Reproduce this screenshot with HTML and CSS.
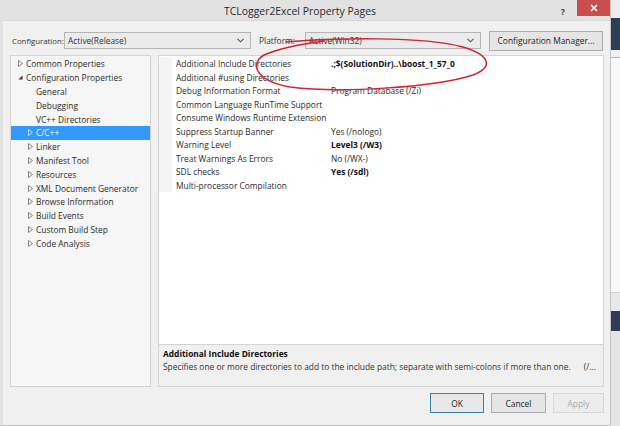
FILE: index.html
```html
<!DOCTYPE html>
<html>
<head>
<meta charset="utf-8">
<link rel="stylesheet" href="styles.css">
</head>
<body>
<div class="screen">
  <div class="dialog">
    <div class="titlebar">
      <div class="title">TCLogger2Excel Property Pages</div>
      <div class="help">?</div>
      <div class="close">
        <svg width="8" height="8" viewBox="0 0 8 8"><path d="M1 1L7 7M7 1L1 7" stroke="#fff" stroke-width="1.6"/></svg>
      </div>
    </div>
    <div class="content">
      <div class="configrow">
        <span class="lbl lbl-config">Configuration:</span>
        <div class="combo combo-config"><span>Active(Release)</span><svg class="chev" width="7" height="5" viewBox="0 0 7 5"><path d="M0.5 0.8L3.5 3.8L6.5 0.8" fill="none" stroke="#555" stroke-width="1.1"/></svg></div>
        <span class="lbl lbl-platform">Platform:</span>
        <div class="combo combo-platform"><span>Active(Win32)</span><svg class="chev" width="7" height="5" viewBox="0 0 7 5"><path d="M0.5 0.8L3.5 3.8L6.5 0.8" fill="none" stroke="#555" stroke-width="1.1"/></svg></div>
        <div class="btn btn-mgr">Configuration Manager...</div>
      </div>
      <div class="panels">
        <div class="tree">
          <div class="node l0"><svg class="tri" width="5" height="7" viewBox="0 0 5 7"><path d="M0.5 0.5L4.5 3.5L0.5 6.5Z" fill="none" stroke="#777" stroke-width="0.9"/></svg><span>Common Properties</span></div>
          <div class="node l0"><svg class="tri" width="5" height="7" viewBox="0 0 5 7"><path d="M4.5 1.5L4.5 5.5L0.5 5.5Z" fill="#333"/></svg><span>Configuration Properties</span></div>
          <div class="node l1 leaf"><span>General</span></div>
          <div class="node l1 leaf"><span>Debugging</span></div>
          <div class="node l1 leaf"><span>VC++ Directories</span></div>
          <div class="node l1 sel"><svg class="tri" width="5" height="7" viewBox="0 0 5 7"><path d="M0.5 0.5L4.5 3.5L0.5 6.5Z" fill="none" stroke="#cfe4ff" stroke-width="0.9"/></svg><span>C/C++</span></div>
          <div class="node l1"><svg class="tri" width="5" height="7" viewBox="0 0 5 7"><path d="M0.5 0.5L4.5 3.5L0.5 6.5Z" fill="none" stroke="#777" stroke-width="0.9"/></svg><span>Linker</span></div>
          <div class="node l1"><svg class="tri" width="5" height="7" viewBox="0 0 5 7"><path d="M0.5 0.5L4.5 3.5L0.5 6.5Z" fill="none" stroke="#777" stroke-width="0.9"/></svg><span>Manifest Tool</span></div>
          <div class="node l1"><svg class="tri" width="5" height="7" viewBox="0 0 5 7"><path d="M0.5 0.5L4.5 3.5L0.5 6.5Z" fill="none" stroke="#777" stroke-width="0.9"/></svg><span>Resources</span></div>
          <div class="node l1"><svg class="tri" width="5" height="7" viewBox="0 0 5 7"><path d="M0.5 0.5L4.5 3.5L0.5 6.5Z" fill="none" stroke="#777" stroke-width="0.9"/></svg><span>XML Document Generator</span></div>
          <div class="node l1"><svg class="tri" width="5" height="7" viewBox="0 0 5 7"><path d="M0.5 0.5L4.5 3.5L0.5 6.5Z" fill="none" stroke="#777" stroke-width="0.9"/></svg><span>Browse Information</span></div>
          <div class="node l1"><svg class="tri" width="5" height="7" viewBox="0 0 5 7"><path d="M0.5 0.5L4.5 3.5L0.5 6.5Z" fill="none" stroke="#777" stroke-width="0.9"/></svg><span>Build Events</span></div>
          <div class="node l1"><svg class="tri" width="5" height="7" viewBox="0 0 5 7"><path d="M0.5 0.5L4.5 3.5L0.5 6.5Z" fill="none" stroke="#777" stroke-width="0.9"/></svg><span>Custom Build Step</span></div>
          <div class="node l1"><svg class="tri" width="5" height="7" viewBox="0 0 5 7"><path d="M0.5 0.5L4.5 3.5L0.5 6.5Z" fill="none" stroke="#777" stroke-width="0.9"/></svg><span>Code Analysis</span></div>
        </div>
        <div class="props">
          <div class="grid">
            <div class="row"><div class="gut"></div><div class="name">Additional Include Directories</div><div class="val bold">.;$(SolutionDir)..\boost_1_57_0</div></div>
            <div class="row"><div class="gut"></div><div class="name">Additional #using Directories</div><div class="val"></div></div>
            <div class="row"><div class="gut"></div><div class="name">Debug Information Format</div><div class="val">Program Database (/Zi)</div></div>
            <div class="row"><div class="gut"></div><div class="name">Common Language RunTime Support</div><div class="val"></div></div>
            <div class="row"><div class="gut"></div><div class="name">Consume Windows Runtime Extension</div><div class="val"></div></div>
            <div class="row"><div class="gut"></div><div class="name">Suppress Startup Banner</div><div class="val">Yes (/nologo)</div></div>
            <div class="row"><div class="gut"></div><div class="name">Warning Level</div><div class="val bold">Level3 (/W3)</div></div>
            <div class="row"><div class="gut"></div><div class="name">Treat Warnings As Errors</div><div class="val">No (/WX-)</div></div>
            <div class="row"><div class="gut"></div><div class="name">SDL checks</div><div class="val bold">Yes (/sdl)</div></div>
            <div class="row"><div class="gut"></div><div class="name">Multi-processor Compilation</div><div class="val"></div></div>
          </div>
          <div class="desc">
            <div class="desc-title">Additional Include Directories</div>
            <div class="desc-text"><span>Specifies one or more directories to add to the include path; separate with semi-colons if more than one.</span><span class="desc-flag">(/...</span></div>
          </div>
        </div>
      </div>
      <div class="buttons">
        <div class="btn btn-ok">OK</div>
        <div class="btn btn-cancel">Cancel</div>
        <div class="btn btn-apply">Apply</div>
      </div>
    </div>
  </div>
  <div class="strip">
    <div class="s1"></div>
    <div class="s2"></div>
    <div class="s3"></div>
    <div class="s4"></div>
    <div class="s5"></div>
    <div class="s6"></div>
  </div>
  <svg class="ink" width="620" height="426" viewBox="0 0 620 426">
    <path d="M286 42 C 335 38, 422 36, 463 47 C 490 55, 494 67, 473 75 C 433 88, 338 93, 290 87 C 256 81, 249 64, 264 55 C 280 48, 302 44, 324 41" fill="none" stroke="#d2232f" stroke-width="1.5" stroke-linecap="round"/>
  </svg>
</div>
</body>
</html>
```
FILE: styles.css
```css
* { box-sizing: border-box; }
html, body { margin: 0; padding: 0; }
body {
  width: 620px;
  height: 426px;
  overflow: hidden;
  font-family: "Open Sans", "Noto Sans", sans-serif;
  font-size: 8.4px;
  color: #1e1e1e;
  background: #e8e8e8;
}
.screen {
  position: relative;
  display: flex;
  width: 620px;
  height: 426px;
}
.dialog {
  width: 611px;
  height: 426px;
  flex: none;
  display: flex;
  flex-direction: column;
  background: #f0f0f0;
  border-left: 3px solid #e2e2e2;
  border-right: 1px solid #c4c4c4;
  border-bottom: 1px solid #c4c4c4;
}
.titlebar {
  height: 21px;
  flex: none;
  display: flex;
  align-items: flex-start;
  background: #e2e2e2;
  border-bottom: 1px solid #d6d6d6;
}
.title {
  flex: 1;
  text-align: center;
  padding-left: 40px;
  padding-top: 4px;
  font-size: 10.4px;
  color: #2a2a2a;
}
.help {
  width: 12px;
  padding-top: 5px;
  font-weight: bold;
  font-size: 9px;
  color: #444;
  text-align: center;
  margin-right: 8px;
}
.close {
  width: 33px;
  height: 16px;
  background: #c84e4e;
  display: flex;
  align-items: center;
  justify-content: center;
}
.content {
  flex: 1;
  display: flex;
  flex-direction: column;
  padding: 9px 6px 0 7px;
}
.configrow {
  display: flex;
  align-items: center;
  height: 21px;
  padding-left: 2px;
}
.lbl { color: #333; flex: none; white-space: nowrap; }
.lbl-config { width: 52px; font-size: 7.8px; }
.lbl-platform { width: 46px; margin-left: 8px; }
.combo {
  flex: none;
  height: 17px;
  display: flex;
  align-items: center;
  justify-content: space-between;
  padding: 0 6px 0 3px;
  background: #ebebeb;
  border: 1px solid #b5b5b5;
  color: #333;
}
.combo-config { width: 187px; }
.combo-platform { width: 176px; }
.chev { flex: none; }
.btn {
  flex: none;
  height: 20px;
  display: flex;
  align-items: center;
  justify-content: center;
  background: #e5e5e5;
  border: 1px solid #adadad;
  color: #222;
}
.btn-mgr { width: 114px; margin-left: 8px; }
.panels {
  display: flex;
  margin-top: 4px;
  height: 332px;
}
.tree {
  width: 141px;
  background: #f6f6f6;
  border: 1px solid #d3d3d3;
  padding-top: 1px;
}
.node {
  height: 13.8px;
  display: flex;
  align-items: center;
  white-space: nowrap;
  color: #2a2a2a;
}
.node .tri { flex: none; margin-right: 3px; }
.node.l0 { padding-left: 7px; }
.node.l1 { padding-left: 17px; }
.node.l1.leaf { padding-left: 25px; }
.node.sel { background: #3399ff; color: #fff; }
.props {
  width: 446px;
  margin-left: 7px;
  display: flex;
  flex-direction: column;
  border: 1px solid #d3d3d3;
  background: #fff;
}
.grid {
  flex: 1;
  background: #fff;
  padding-top: 1px;
}
.row {
  display: flex;
  height: 13.5px;
  align-items: stretch;
}
.gut { width: 13px; background: #f4f4f4; }
.name {
  width: 159px;
  padding-left: 4px;
  display: flex;
  align-items: center;
  white-space: nowrap;
  color: #2a2a2a;
}
.val {
  flex: 1;
  display: flex;
  align-items: center;
  white-space: nowrap;
  color: #2a2a2a;
}
.bold { font-weight: bold; color: #111; }
.desc {
  height: 42px;
  flex: none;
  background: #f0f0f0;
  border-top: 1px solid #d3d3d3;
  padding: 2px 4px 0 4px;
}
.desc-title { font-weight: bold; color: #111; height: 13px; line-height: 13px; }
.desc-text { display: flex; justify-content: space-between; color: #333; height: 13px; line-height: 13px; }
.desc-flag { padding-right: 3px; }
.buttons {
  display: flex;
  justify-content: flex-end;
  margin-top: 6px;
  gap: 7px;
}
.btn-ok { width: 54px; border-color: #3c7fb1; background: #e8e8e8; }
.btn-cancel { width: 55px; }
.btn-apply { width: 51px; color: #a8a8a8; border-color: #d9d9d9; background: #ececec; }
.strip {
  flex: 1;
  display: flex;
  flex-direction: column;
}
.s1 { height: 18px; background: #ececec; }
.s2 { height: 32px; background: #2d3c57; }
.s3 { height: 8px; background: #f0f0f0; border-bottom: 1px solid #b8b8b8; }
.s4 { height: 235px; background: #f8f8f8; border-bottom: 1px solid #cfcfcf; }
.s5 { height: 20px; background: #2d3c57; margin-top: 18px; }
.s6 { flex: 1; background: #e4e4e4; }
.ink {
  position: absolute;
  left: 0;
  top: 0;
  pointer-events: none;
}
```
